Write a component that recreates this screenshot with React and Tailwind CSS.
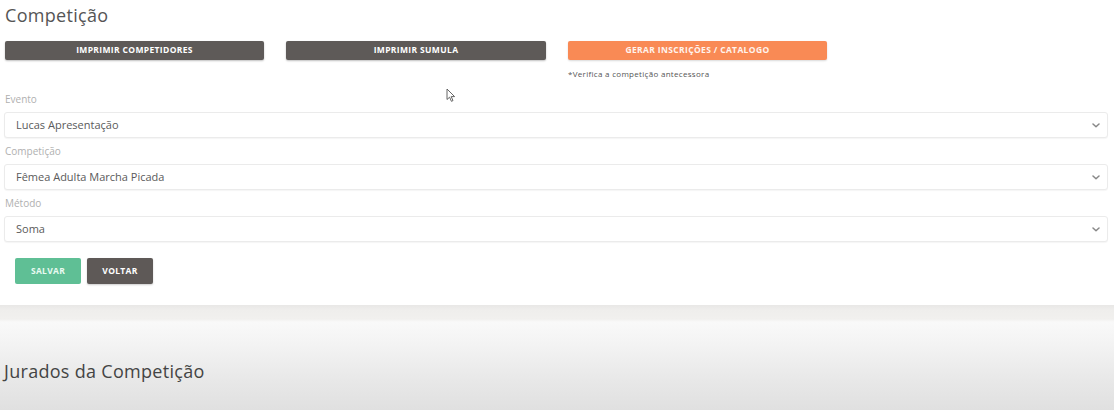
import React from "react";

function Chevron() {
  return (
    <svg width="8" height="5" viewBox="0 0 8 5" className="shrink-0">
      <path d="M1 1 L4 3.8 L7 1" fill="none" stroke="#888" strokeWidth="1.5" strokeLinecap="round" strokeLinejoin="round" />
    </svg>
  );
}

function Field({ label, value }) {
  return (
    <div className="flex flex-col">
      <div className="h-[26px] pt-[6px] pl-[5px] text-[10px] text-[#b0b0b0] leading-[14px]">{label}</div>
      <div className="h-[26px] ml-[4px] mr-[6px] border border-[#ebebeb] rounded-[3px] bg-white flex items-center justify-between pl-[11px] pr-[7px] shadow-[0_1px_1px_rgba(0,0,0,0.04)]">
        <span className="text-[11px] text-[#5a5a5a]">{value}</span>
        <Chevron />
      </div>
    </div>
  );
}

export default function App() {
  return (
    <div className="w-[1114px] h-[410px] overflow-hidden bg-white relative" style={{ fontFamily: '"Open Sans", "Noto Sans", sans-serif' }}>
      <div className="bg-white h-[305px] flex flex-col">
        <h1 className="pl-[5px] pt-[2px] h-[41px] text-[18px] leading-[26px] text-[#555] tracking-[0.3px]">Competição</h1>
        <div className="flex gap-[22px] pl-[5px] h-[45px]">
          <div className="flex flex-col">
            <div className="w-[259px] h-[19px] bg-[#5e5a58] rounded-[2px] flex items-center justify-center text-white text-[8.5px] font-bold tracking-[0.35px] shadow-[0_1px_2px_rgba(0,0,0,0.25)]">IMPRIMIR COMPETIDORES</div>
          </div>
          <div className="flex flex-col">
            <div className="w-[260px] h-[19px] bg-[#5e5a58] rounded-[2px] flex items-center justify-center text-white text-[8.5px] font-bold tracking-[0.35px] shadow-[0_1px_2px_rgba(0,0,0,0.25)]">IMPRIMIR SUMULA</div>
          </div>
          <div className="flex flex-col">
            <div className="w-[259px] h-[19px] bg-[#f98a55] rounded-[2px] flex items-center justify-center text-[#fff4ee] text-[8.5px] font-bold tracking-[0.35px] shadow-[0_1px_2px_rgba(0,0,0,0.15)]">GERAR INSCRIÇÕES / CATALOGO</div>
            <div className="mt-[9px] text-[8px] text-[#555] leading-[10px] tracking-[0.3px]">*Verifica a competição antecessora</div>
          </div>
        </div>
        <Field label="Evento" value="Lucas Apresentação" />
        <Field label="Competição" value="Fêmea Adulta Marcha Picada" />
        <Field label="Método" value="Soma" />
        <div className="flex gap-[6px] pl-[15px] pt-[16px]">
          <div className="w-[66px] h-[26px] bg-[#5fbf95] rounded-[2px] flex items-center justify-center text-[#eafaf2] text-[8.5px] font-bold tracking-[0.3px]">SALVAR</div>
          <div className="w-[66px] h-[26px] bg-[#5e5957] rounded-[2px] flex items-center justify-center text-white text-[8.5px] font-bold tracking-[0.3px] shadow-[0_1px_2px_rgba(0,0,0,0.2)]">VOLTAR</div>
        </div>
      </div>
      <div className="h-[105px] bg-[linear-gradient(to_bottom,#e8e7e6_0px,#efeeec_5px,#f1f0ee_14px,#f9f9f9_17px,#f3f3f3_40px,#e8e8e8_75px,#e0e0e0_105px)] pl-[4px] pt-[54px]">
        <h2 className="text-[18px] leading-[24px] text-[#444] tracking-[0.3px]">Jurados da Competição</h2>
      </div>
      <svg className="absolute left-[446px] top-[88px]" width="10" height="15" viewBox="0 0 10 15">
        <path d="M1 1 L1 11.5 L3.6 9.2 L5.4 13.3 L7 12.6 L5.2 8.6 L8.6 8.6 Z" fill="#fff" stroke="#555" strokeWidth="0.9" strokeLinejoin="round" />
      </svg>
    </div>
  );
}
